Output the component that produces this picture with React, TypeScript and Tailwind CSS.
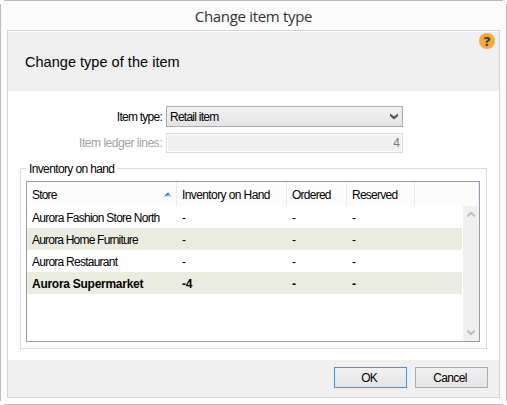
import type { ReactNode } from "react";

const rows = [
  { store: "Aurora Fashion Store North", onHand: "-", cls: "tracking-[-0.74px]" },
  { store: "Aurora Home Furniture", onHand: "-", cls: "bg-[#eaebe1] tracking-[-0.8px]" },
  { store: "Aurora Restaurant", onHand: "-", cls: "tracking-[-0.75px]" },
  { store: "Aurora Supermarket", onHand: "-4", cls: "bg-[#eaebe1] font-bold tracking-[-0.27px]" },
];

function HeaderCell({ className, children }: { className: string; children?: ReactNode }) {
  return (
    <div className={`flex h-6 items-center border-r border-[#e3ecfb] pl-[5px] pt-[2px] ${className}`}>{children}</div>
  );
}

function Chevron({ color, up = false }: { color: string; up?: boolean }) {
  return (
    <svg width="8" height="7" viewBox="0 0 8 7" className={up ? "rotate-180" : ""}>
      <path d="M0 .5 L4 3.5 L8 .5 V3 L4 6.5 L0 3Z" fill={color} />
    </svg>
  );
}

export default function App() {
  return (
    <div className="relative h-[405px] w-[507px] overflow-hidden bg-[#fbfbfb] px-[7px] font-['Liberation_Sans',Arial,sans-serif] text-[12px] leading-[14px] text-black">
      <div className="absolute left-1 top-0 h-px w-[499px] bg-[#bcbcbc]" />
      <div className="absolute bottom-0 left-1 h-px w-[499px] bg-[#bcbcbc]" />
      <div className="absolute left-0 top-1 h-[397px] w-px bg-[#bcbcbc]" />
      <div className="absolute right-0 top-1 h-[397px] w-px bg-[#bcbcbc]" />
      <div className="flex h-[30px] items-center justify-center pt-[2px] font-['Open_Sans',sans-serif] text-[15px] text-[#333]">
        <span className="tracking-[-0.32px]">Change item type</span>
      </div>
      <div className="flex h-[368px] w-[493px] flex-col border border-[#d3d3d3] bg-white">
        <header className="mt-px flex h-[59px] justify-between bg-[#efefef] pl-[17px] pr-1">
          <h1 className="pt-[22px] text-[14.5px] leading-4 tracking-[0.03px]">Change type of the item</h1>
          <div className="mt-px flex size-4 items-center justify-center rounded-full bg-[#f3aa3d] font-['Open_Sans',sans-serif] text-[13px] font-extrabold leading-4 text-[#404040]">
            ?
          </div>
        </header>
        <div className="mt-[15px] flex h-[21px] items-center">
          <label className="w-[154px] text-right tracking-[-0.75px]">Item type:</label>
          <div className="ml-1 flex h-[21px] w-[237px] items-center justify-between border border-[#acacac] bg-linear-to-b from-[#f0f0f0] to-[#e4e4e4] pl-[3px] pr-1">
            <span className="pt-px tracking-[-0.75px]">Retail item</span>
            <Chevron color="#505050" />
          </div>
        </div>
        <div className="mt-[6px] flex h-5 items-center text-[#a3a3a3]">
          <label className="w-[154px] text-right tracking-[-0.47px]">Item ledger lines:</label>
          <div className="ml-1 flex h-5 w-[237px] items-center justify-end border border-[#d9d9d9] bg-[#f0f0f0] pr-[2px] text-[#777] shadow-[inset_0_0_0_1px_white]">4</div>
        </div>
        <section className="relative ml-3 mt-[15px] h-[181px] w-[467px] border border-[#dcdcdc] px-[5px] pt-3">
          <span className="absolute left-[5px] top-[-7px] bg-white px-[3px] tracking-[-0.63px]">Inventory on hand</span>
          <div className="h-[161px] w-[454px] border border-[#9b9da1] bg-white">
            <div className="flex bg-[#fcfcfc]">
              <HeaderCell className="w-[150px] justify-between pr-1 tracking-[-0.8px]">
                Store
                <svg width="8" height="5" viewBox="0 0 8 5" className="mb-[2px]">
                  <path d="M0 4.5 4 .5 8 4.5Z" fill="#8fc4dd" />
                  <path d="M0 4.5 4 .5 5.5 2Z" fill="#3f6f8e" />
                </svg>
              </HeaderCell>
              <HeaderCell className="w-[110px] tracking-[-0.6px]">Inventory on Hand</HeaderCell>
              <HeaderCell className="w-[60px] tracking-[-0.75px]">Ordered</HeaderCell>
              <HeaderCell className="w-[68px] tracking-[-0.75px]">Reserved</HeaderCell>
              <HeaderCell className="w-[64px]" />
            </div>
            <div className="flex">
              <div className="w-[435px]">
                {rows.map((r) => (
                  <div key={r.store} className={`flex h-[22px] items-center pl-[5px] pt-px ${r.cls}`}>
                    <span className="w-[150px]">{r.store}</span>
                    <span className="w-[110px]">{r.onHand}</span>
                    <span className="w-[60px]">-</span>
                    <span>-</span>
                  </div>
                ))}
              </div>
              <div className="ml-px flex h-[135px] w-4 flex-col items-center justify-between bg-[#f0f0f0] py-[5px]">
                <Chevron color="#bfbfbf" up />
                <Chevron color="#bfbfbf" />
              </div>
            </div>
          </div>
        </section>
        <footer className="mt-[11px] flex h-[37px] justify-end gap-2 bg-[#f0f0f0] pr-[11px] pt-[7px]">
          <button className="h-[21px] w-[73px] border border-[#3399ff] bg-linear-to-b from-[#f0f0f0] to-[#e5e5e5] pr-[3px] tracking-[-0.8px]">OK</button>
          <button className="h-[21px] w-[73px] border border-[#acacac] bg-linear-to-b from-[#f0f0f0] to-[#e5e5e5] pr-[3px] tracking-[-0.65px]">Cancel</button>
        </footer>
      </div>
    </div>
  );
}
